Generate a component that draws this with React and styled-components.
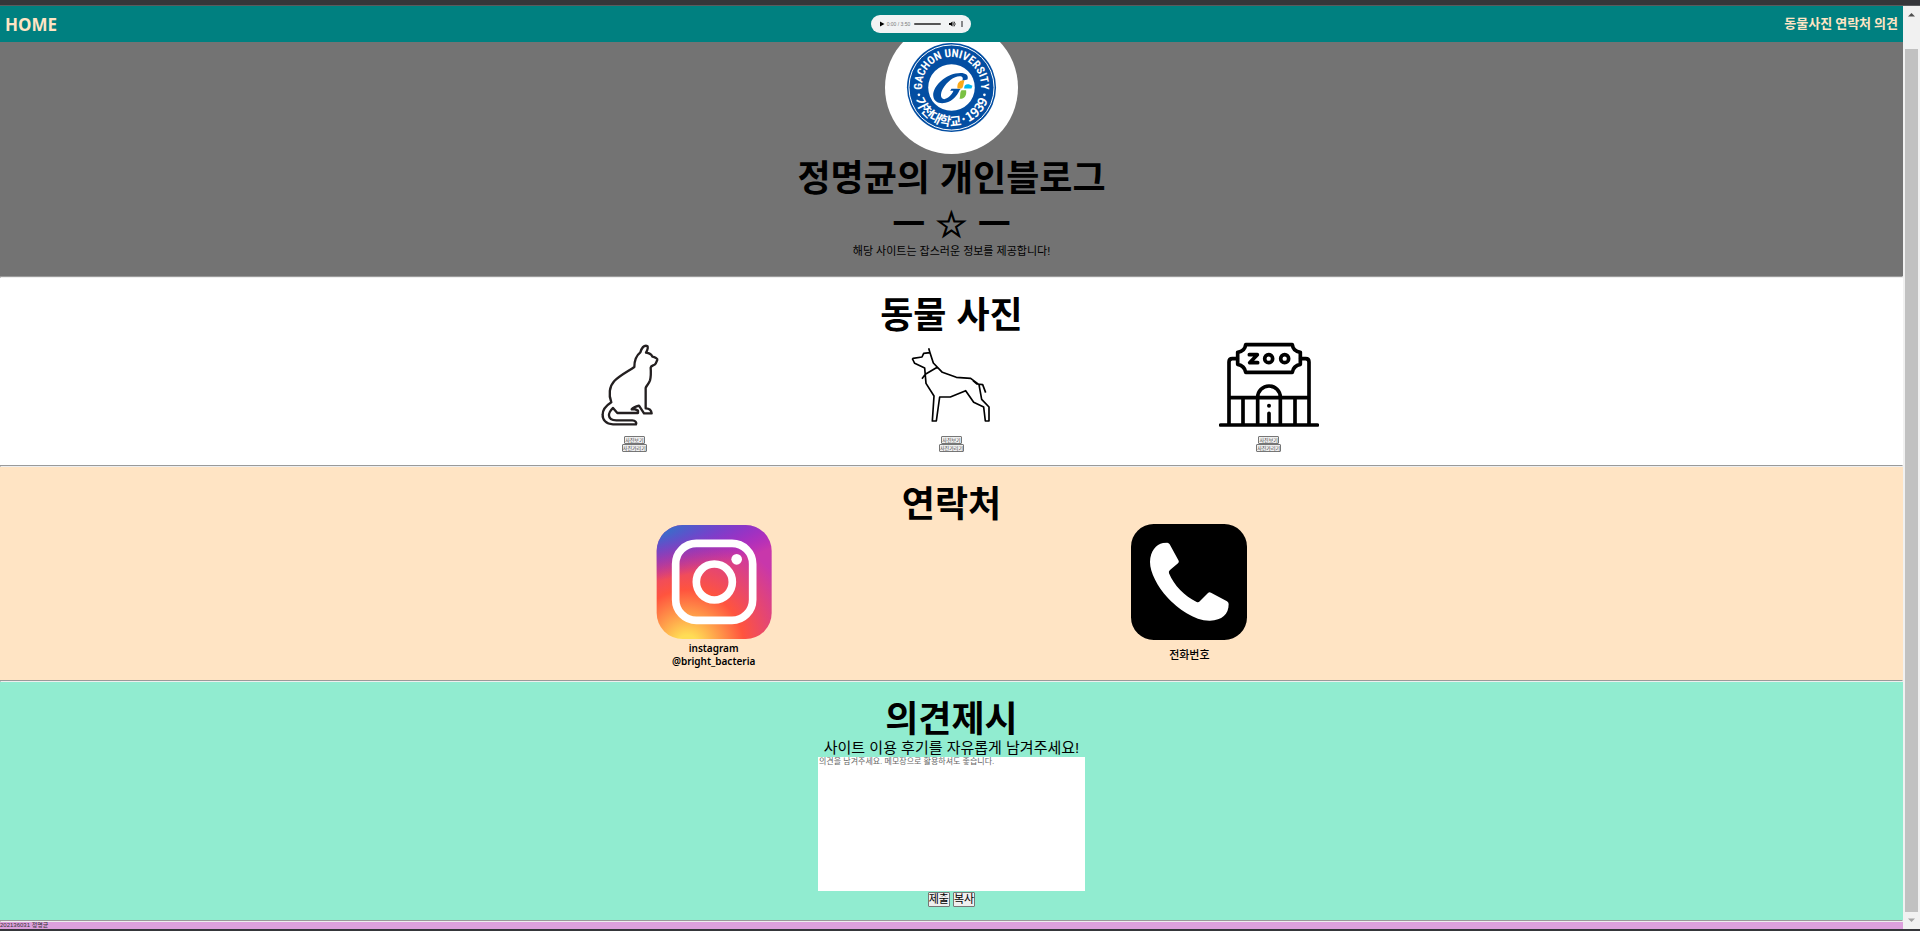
import React from "react";
import styled, { createGlobalStyle } from "styled-components";

const korean = `"Liberation Sans", "Noto Sans CJK KR", sans-serif`;

const GlobalStyle = createGlobalStyle`
  *, *::before, *::after { box-sizing: border-box; }
  body {
    margin: 0;
    background: #35363a;
    color: #000;
    font-family: ${korean};
  }
`;

const Window = styled.div`
  display: flex;
  flex-direction: column;
  min-height: 100vh;
  padding-bottom: 2px;
`;

const WindowEdge = styled.div`
  height: 6px;
  border-bottom: 1px solid #5a5b5e;
`;

const Viewport = styled.div`
  flex: 1;
  display: flex;
`;

const Page = styled.div`
  flex: 1;
  min-width: 0;
  display: flex;
  flex-direction: column;
`;

const NavBar = styled.nav`
  position: relative;
  z-index: 1;
  display: flex;
  justify-content: space-between;
  align-items: center;
  height: 36px;
  padding: 0 5px;
  background: #008080;
`;

const NavLink = styled.a`
  color: #ffe4c4;
  font-weight: 700;
  text-decoration: none;
`;

const HomeLink = styled(NavLink)`
  font-family: "Noto Sans", sans-serif;
  font-size: 17px;
`;

const NavLinks = styled.div`
  display: flex;
  gap: 3px;
  font-size: 13px;
  line-height: 16px;
  padding-bottom: 1px;
`;

const Player = styled.div`
  display: flex;
  align-items: center;
  width: 100px;
  height: 18px;
  padding: 0 3px 0 8px;
  border-radius: 9px;
  background: #f1f3f4;
`;

const PlayerButton = styled.button`
  display: flex;
  padding: 0;
  border: 0;
  background: none;
`;

const PlayerTime = styled.span`
  margin-left: 2px;
  font-size: 5px;
  line-height: 8px;
  color: #777;
  white-space: nowrap;
`;

const Seek = styled.input`
  appearance: none;
  flex: none;
  width: 27px;
  height: 2px;
  margin: 0 8px 0 auto;
  border-radius: 1px;
  background: #555;
  &::-webkit-slider-thumb {
    appearance: none;
    width: 0;
    height: 0;
  }
`;

const Section = styled.section`
  display: flex;
  flex-direction: column;
  align-items: center;
  padding: 19px 0 ${(p) => p.$bottom}px;
  background: ${(p) => p.$color};
`;

const Hero = styled(Section)`
  padding-top: 0;
`;

const Avatar = styled.svg`
  display: block;
  width: 133px;
  height: 133px;
  margin-top: -21px;
`;

const Title = styled.h1`
  margin: 0;
  font-size: 36px;
  line-height: 50px;
  font-weight: 700;
  text-align: center;
`;

const StarLine = styled.p`
  margin: 0;
  padding-top: 2px;
  font-family: "Liberation Sans", "DejaVu Sans", "Noto Sans CJK KR", sans-serif;
  font-size: 36px;
  line-height: 38px;
  font-weight: 700;
`;

const Star = styled.span`
  -webkit-text-stroke: 1px #000;
`;

const Heading = styled.h2`
  margin: 0;
  font-size: 36px;
  line-height: 38px;
  font-weight: 700;
`;

const Lead = styled.p`
  margin: 0;
  font-size: 11px;
  line-height: 14px;
`;

const FormLabel = styled.label`
  font-size: 15px;
  line-height: 18px;
`;

const Divider = styled.hr`
  width: 100%;
  margin: 0;
  border: 1px inset;
  color: gray;
`;

const Columns = styled.div`
  display: grid;
  grid-template-columns: repeat(${(p) => p.$count}, 1fr);
  width: 50%;
`;

const AnimalCard = styled.article`
  display: flex;
  flex-direction: column;
  align-items: center;
`;

const AnimalArt = styled.svg`
  display: block;
  width: 100px;
  height: 100px;
  margin-bottom: 1px;
  fill: none;
  stroke: #000;
  stroke-linejoin: round;
`;

const TinyButton = styled.button`
  height: 8px;
  padding: 0;
  border: 1px solid #767676;
  border-radius: 1px;
  background: #efefef;
  color: #444;
  font-family: ${korean};
  font-size: 5px;
  line-height: 6px;
  white-space: nowrap;
`;

const Contact = styled.figure`
  display: flex;
  flex-direction: column;
  align-items: center;
  margin: 0;
`;

const ContactIcon = styled.svg`
  display: block;
  width: 116px;
  height: 116px;
`;

const ContactLabel = styled.figcaption`
  display: flex;
  align-items: center;
  height: 30px;
  text-align: center;
  font-size: ${(p) => (p.$latin ? 10 : 11)}px;
  font-weight: ${(p) => (p.$latin ? 600 : 500)};
  line-height: 13px;
  font-family: ${(p) => (p.$latin ? `"Noto Sans", sans-serif` : korean)};
`;

const Form = styled.form`
  display: flex;
  flex-direction: column;
  align-items: center;
`;

const Opinion = styled.textarea`
  display: block;
  width: 267px;
  height: 134px;
  padding: 0 1px;
  border: 0;
  resize: none;
  background: #fff;
  font-family: ${korean};
  font-size: 8px;
  line-height: 10px;
  &::placeholder {
    color: #666;
  }
`;

const Actions = styled.div`
  display: flex;
  gap: 3px;
  padding-top: 1px;
`;

const FormButton = styled.button`
  height: 15px;
  padding: 0;
  border: 1px solid #767676;
  border-radius: 1px;
  background: #efefef;
  color: #000;
  font-family: ${korean};
  font-size: 11px;
  line-height: 13px;
  white-space: nowrap;
`;

const Footer = styled.footer`
  flex: 1;
  min-height: 7px;
  background: #dda0dd;
  color: #333;
  font-size: 6px;
  line-height: 7px;
`;

const ScrollTrack = styled.div`
  display: flex;
  flex-direction: column;
  align-items: center;
  justify-content: space-between;
  width: 17px;
  padding: 6px 0;
  background: #f1f1f1;
`;

const ScrollThumb = styled.div`
  flex: 1;
  width: 13px;
  margin: 32px 0 6px;
  background: #c1c1c1;
`;

const Arrow = styled.svg`
  display: block;
  width: 7px;
  height: 5px;
`;

function Seal() {
  return (
    <Avatar viewBox="-200 -200 400 400" role="img" aria-label="Gachon University">
      <defs>
        <path id="sealTop" d="M-87 16A89 89 0 1 1 87 16" />
        <path id="sealBottom" d="M-116 0A116 116 0 0 0 116 0" />
      </defs>
      <circle r="200" fill="#fff" />
      <circle r="134" fill="#034ea2" />
      <circle r="128" fill="none" stroke="#fff" strokeWidth="3" />
      <circle r="70" fill="#fff" />
      <g fill="#fff" fontWeight="700" textAnchor="middle">
        <text fontFamily="'Roboto Condensed', 'Liberation Sans', sans-serif" fontSize="34">
          <textPath href="#sealTop" startOffset="50%">GACHON UNIVERSITY</textPath>
        </text>
        <text fontFamily="'Noto Sans CJK KR', sans-serif" fontSize="38">
          <textPath href="#sealBottom" startOffset="50%">가천대학교·1939</textPath>
        </text>
      </g>
      <circle cx="-98" cy="22" r="4" fill="#fff" />
      <circle cx="99" cy="22" r="4" fill="#fff" />
      <path
        d="M48 -24C54 -42 34 -47 12 -42C-24 -34 -56 -2 -55 24C-54 44 -36 50 -18 46C4 40 16 26 24 8L28 4H0L-4 10H6C0 24 -12 34 -22 35C-34 35 -34 18 -26 4C-14 -18 8 -34 24 -34C34 -34 36 -28 32 -20Z"
        fill="#034ea2"
      />
      <path d="M39 -22C24 -23 16 -14 18 3H29C36 2 35 -10 39 -22Z" fill="#fba919" />
      <path d="M38 3C37 -10 49 -14 63 -5L60 3Z" fill="#00b9f2" />
      <path d="M30 8H44C46 25 39 35 24 34C28 25 24 15 30 8Z" fill="#7ac143" />
    </Avatar>
  );
}

function Cat() {
  return (
    <AnimalArt viewBox="71 195 300 300" aria-hidden="true">
      <path
        strokeWidth="7"
        stroke="#231f20"
        d="M222 291C222 271 226 258 240 247C245 231 254 226 261 228C265 234 261 241 257 248C264 249 273 251 276 260C284 261 292 266 291 269C289 273 288 280 284 283C279 287 272 286 271 293C272 307 272 320 269 331C265 343 257 348 256 354V415C265 415 273 420 274 430H251L236 407C228 409 219 412 214 418H225L233 422V429H171L158 414C151 420 145 431 146 437C147 448 158 451 168 451H216C225 451 230 458 227 463H158C137 462 126 449 127 434C127 418 142 404 153 397C144 374 147 349 162 333C178 316 203 304 222 291Z"
      />
    </AnimalArt>
  );
}

function Dog() {
  return (
    <AnimalArt viewBox="1024 195 300 300" aria-hidden="true">
      <path
        strokeWidth="5"
        d="M1107 235L1111 248L1092 250L1087 261L1060 265Q1057 267 1060 270L1065 280L1095 294L1099 340L1123 378L1118 453H1130L1140 381H1172L1218 362L1242 397L1272 411L1277 453H1288V411L1266 388L1258 344L1233 325L1190 322L1148 307L1121 279L1111 248M1134 291L1097 313L1087 326M1240 332L1252 342L1269 344L1278 368"
      />
    </AnimalArt>
  );
}

function Zoo() {
  return (
    <AnimalArt viewBox="117 45 300 300" aria-hidden="true">
      <g strokeWidth="11" strokeLinecap="round">
        <path d="M122 315H412M147 315V126Q147 116 157 116H172M387 315V126Q387 116 377 116H362M147 233H387M189 233V315M345 233V315M233 315V232A34 34 0 0 1 301 232V315M267 280V310" />
        <path d="M197 74H337Q339 94 361 97V133Q340 137 337 157H197Q194 137 173 133V97Q195 94 197 74Z" />
        <path d="M208 104H232L209 128H233" />
        <circle cx="266" cy="116" r="12" />
        <circle cx="314" cy="116" r="12" />
      </g>
      <circle cx="267" cy="257" r="6" fill="#000" stroke="none" />
    </AnimalArt>
  );
}

function Instagram() {
  return (
    <ContactIcon viewBox="106 192 348 348" aria-hidden="true">
      <defs>
        <radialGradient id="warm" gradientUnits="userSpaceOnUse" cx="200" cy="560" r="340">
          <stop offset="0" stopColor="#ffdd55" />
          <stop offset="0.1" stopColor="#ffdd55" />
          <stop offset="0.5" stopColor="#ff543e" />
          <stop offset="1" stopColor="#c837ab" />
        </radialGradient>
        <radialGradient
          id="cool"
          gradientUnits="userSpaceOnUse"
          cx="0"
          cy="0"
          r="1"
          gradientTransform="translate(50 220) rotate(79) scale(153 631)"
        >
          <stop offset="0" stopColor="#3771c8" />
          <stop offset="0.128" stopColor="#3771c8" />
          <stop offset="1" stopColor="#6600ff" stopOpacity="0" />
        </radialGradient>
      </defs>
      <rect x="108" y="195" width="345" height="342" rx="78" fill="url(#warm)" />
      <rect x="108" y="195" width="345" height="342" rx="78" fill="url(#cool)" />
      <g fill="none" stroke="#fff" strokeWidth="23">
        <rect x="165" y="250" width="231" height="231" rx="62" />
        <circle cx="281" cy="366" r="54" />
      </g>
      <circle cx="348" cy="298" r="16" fill="#fff" />
    </ContactIcon>
  );
}

function Phone() {
  return (
    <ContactIcon viewBox="94 72 348 348" aria-hidden="true">
      <rect x="94" y="72" width="348" height="348" rx="68" />
      <path
        fill="#fff"
        d="M190 129L203 128Q207 128 210 133L237 182Q239 186 235 190L211 210Q206 214 208 220C223 257 255 288 291 306Q297 308 301 303L325 279Q329 275 334 278L382 304Q387 307 387 312C387 344 367 360 331 362C286 363 235 327 202 291C174 260 151 218 151 186C152 153 169 134 190 129Z"
      />
    </ContactIcon>
  );
}

const animals = [
  { name: "cat", Art: Cat },
  { name: "dog", Art: Dog },
  { name: "zoo", Art: Zoo },
];

function AudioPlayer() {
  return (
    <Player>
      <PlayerButton aria-label="play">
        <svg width="6" height="6" viewBox="0 0 6 6"><path d="M1 0.5L5.500 3L1 5.500Z" /></svg>
      </PlayerButton>
      <PlayerTime>0:00 / 3:50</PlayerTime>
      <Seek type="range" aria-label="seek" defaultValue="0" />
      <PlayerButton aria-label="mute">
        <svg width="7" height="6" viewBox="0 0 7 6">
          <path d="M0 2H1.500L3.500 0.500V5.500L1.500 4H0Z" />
          <path d="M4.500 1.500Q5.300 3 4.500 4.500M5 0.500Q7.500 3 5 5.500" fill="none" stroke="#000" strokeWidth="0.700" />
        </svg>
      </PlayerButton>
      <PlayerButton aria-label="more">
        <svg width="12" height="6" viewBox="0 0 12 6">
          <circle cx="6" cy="1" r="0.800" /><circle cx="6" cy="3" r="0.800" /><circle cx="6" cy="5" r="0.800" />
        </svg>
      </PlayerButton>
    </Player>
  );
}

export default function App() {
  return (
    <Window>
      <GlobalStyle />
      <WindowEdge />
      <Viewport>
        <Page>
          <NavBar>
            <HomeLink href="#home">HOME</HomeLink>
            <AudioPlayer />
            <NavLinks>
              <NavLink href="#animals">동물사진</NavLink>
              <NavLink href="#contact">연락처</NavLink>
              <NavLink href="#opinion">의견</NavLink>
            </NavLinks>
          </NavBar>

          <Hero id="home" $color="#737373" $bottom={18}>
            <Seal />
            <Title>정명균의 개인블로그</Title>
            <StarLine>ㅡ <Star>☆</Star> ㅡ</StarLine>
            <Lead>해당 사이트는 잡스러운 정보를 제공합니다!</Lead>
          </Hero>
          <Divider />

          <Section id="animals" $color="#fff" $bottom={13}>
            <Heading>동물 사진</Heading>
            <Columns $count={3}>
              {animals.map(({ name, Art }) => (
                <AnimalCard key={name}>
                  <Art />
                  <TinyButton>사진보기</TinyButton>
                  <TinyButton>사진가리기</TinyButton>
                </AnimalCard>
              ))}
            </Columns>
          </Section>
          <Divider />

          <Section id="contact" $color="#ffe4c4" $bottom={10}>
            <Heading>연락처</Heading>
            <Columns $count={2}>
              <Contact>
                <Instagram />
                <ContactLabel $latin>instagram<br />@bright_bacteria</ContactLabel>
              </Contact>
              <Contact>
                <Phone />
                <ContactLabel>전화번호</ContactLabel>
              </Contact>
            </Columns>
          </Section>
          <Divider />

          <Section id="opinion" $color="#91ecd0" $bottom={13}>
            <Heading>의견제시</Heading>
            <Form onSubmit={(e) => e.preventDefault()}>
              <FormLabel htmlFor="opinion-text">
                사이트 이용 후기를 자유롭게 남겨주세요!
              </FormLabel>
              <Opinion
                id="opinion-text"
                placeholder="의견을 남겨주세요. 메모장으로 활용하셔도 좋습니다."
              />
              <Actions>
                <FormButton type="submit">제출</FormButton>
                <FormButton type="button">복사</FormButton>
              </Actions>
            </Form>
          </Section>
          <Divider />
          <Footer>202136031 정명균</Footer>
        </Page>

        <ScrollTrack aria-hidden="true">
          <Arrow viewBox="0 0 7 5"><path d="M0 4.500L3.500 1L7 4.500Z" fill="#505050" /></Arrow>
          <ScrollThumb />
          <Arrow viewBox="0 0 7 5"><path d="M0 0.500L3.500 4L7 0.500Z" fill="#a3a3a3" /></Arrow>
        </ScrollTrack>
      </Viewport>
    </Window>
  );
}
